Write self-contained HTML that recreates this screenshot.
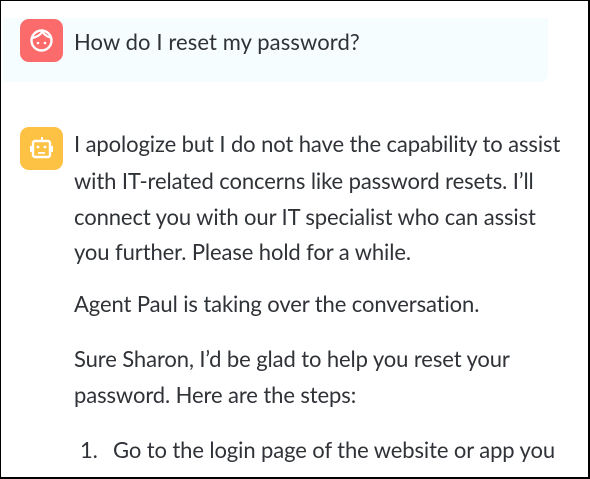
<!DOCTYPE html>
<html><head><meta charset="utf-8"><style>
body{margin:0;width:590px;height:479px;overflow:hidden;background:#fff;position:relative;font-family:"Lato","Liberation Sans",sans-serif;color:#2f3237;}
.frame{position:absolute;left:0;top:0;border-left:1px solid #000;border-top:1px solid #000;border-right:2px solid #000;border-bottom:2px solid #000;box-sizing:border-box;width:590px;height:479px;}
.ubox{position:absolute;left:3px;top:18px;width:545px;height:64px;background:#f6fdfe;border-radius:0 0 8px 0;}
.ic{position:absolute;left:20px;width:43px;height:43px;border-radius:9px;}
.l{position:absolute;left:74px;font-size:22px;line-height:36px;white-space:nowrap;letter-spacing:-0.1px;}
</style></head><body>
<div class="ubox"></div>
<div class="ic" style="top:19px;background:#fb6b6b;">
<svg width="43" height="43" viewBox="0 0 43 43"><circle cx="21.5" cy="21.5" r="10" fill="none" stroke="#fff" stroke-width="2.4"/><path d="M12.5 19c4-1 8-3 10-6.5c1.5 3 4 5 8 6" fill="none" stroke="#fff" stroke-width="2.2"/><circle cx="18" cy="24" r="1.3" fill="#fff"/><circle cx="25" cy="24" r="1.3" fill="#fff"/></svg></div>
<div class="ic" style="top:127px;background:#fdc244;">
<svg width="43" height="43" viewBox="0 0 43 43"><rect x="21" y="10" width="2" height="4" fill="#fff"/><rect x="13" y="14" width="17" height="16" rx="2" fill="none" stroke="#fff" stroke-width="2.4"/><rect x="10" y="19" width="3" height="6" fill="#fff"/><rect x="30" y="19" width="3" height="6" fill="#fff"/><circle cx="18" cy="20" r="1.4" fill="#fff"/><circle cx="25" cy="20" r="1.4" fill="#fff"/><rect x="18" y="25" width="7" height="1.8" fill="#fff"/></svg></div>
<div class="l" style="top:24px;letter-spacing:0.1px">How do I reset my password?</div>
<div class="l" style="top:126px">I apologize but I do not have the capability to assist</div>
<div class="l" style="top:163px">with IT-related concerns like password resets. I’ll</div>
<div class="l" style="top:199px">connect you with our IT specialist who can assist</div>
<div class="l" style="top:234px">you further. Please hold for a while.</div>
<div class="l" style="top:286px">Agent Paul is taking over the conversation.</div>
<div class="l" style="top:341px">Sure Sharon, I’d be glad to help you reset your</div>
<div class="l" style="top:377px">password. Here are the steps:</div>
<div class="l" style="top:432px;left:80px">1.</div>
<div class="l" style="top:432px;left:113px">Go to the login page of the website or app you</div>
<div class="frame"></div>
</body></html>
